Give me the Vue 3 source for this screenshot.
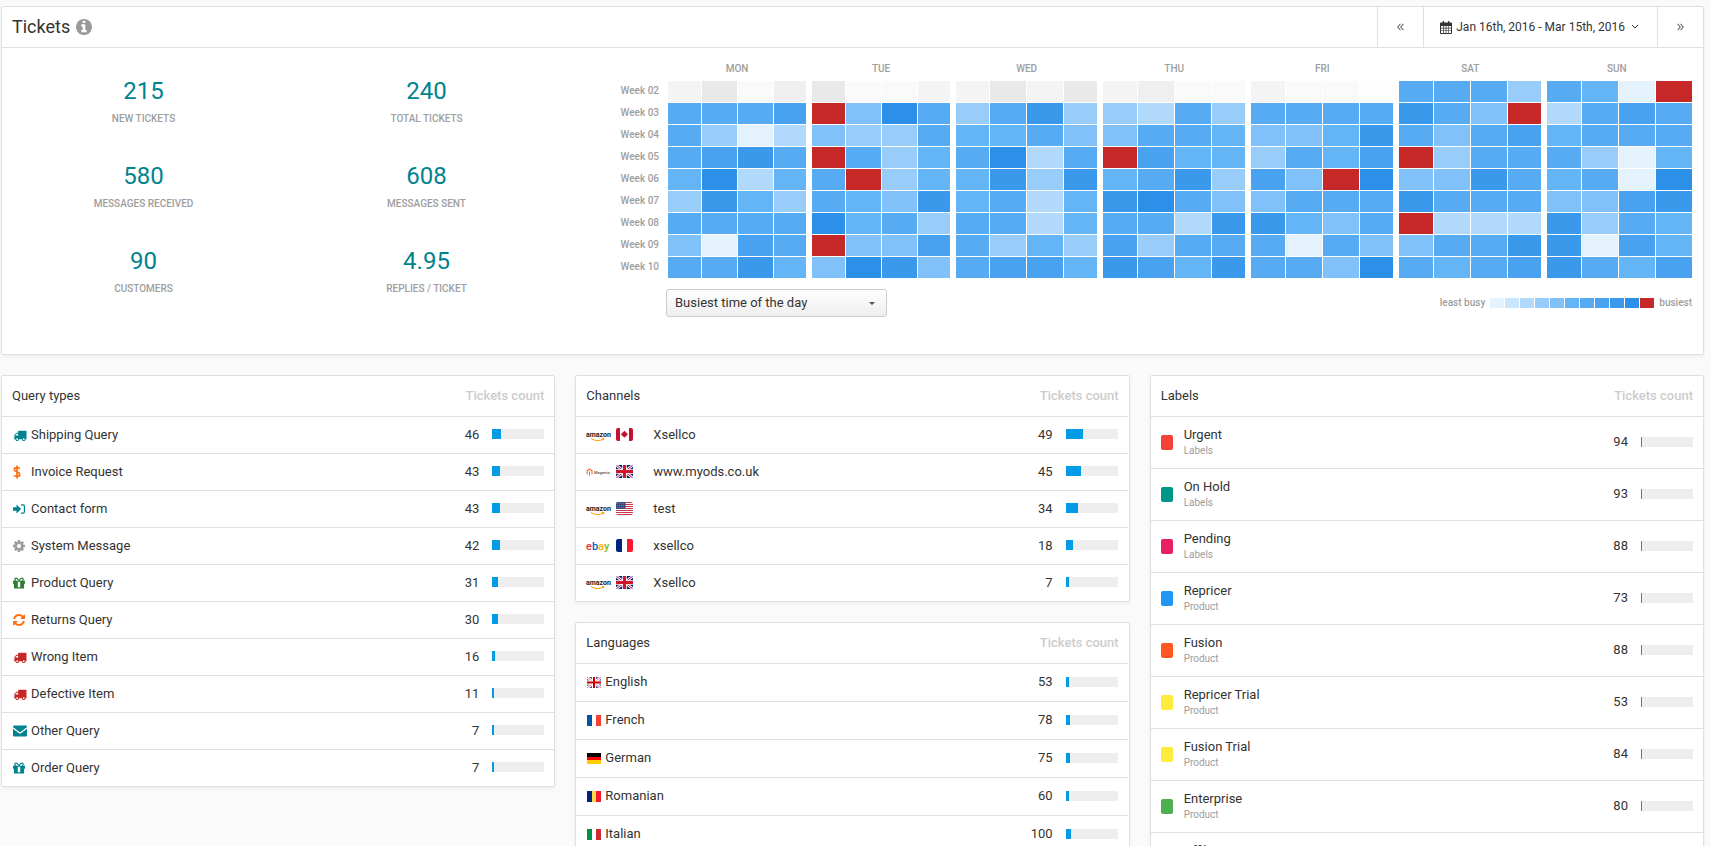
<script setup>
import { ref } from 'vue'

const stats = [
  ['215', 'New tickets'], ['240', 'Total tickets'],
  ['580', 'Messages received'], ['608', 'Messages sent'],
  ['90', 'Customers'], ['4.95', 'Replies / ticket'],
]

const days = ['MON', 'TUE', 'WED', 'THU', 'FRI', 'SAT', 'SUN']
const columns = [
  34, 36, 36, 38, 34, 36, 36, 38, 34, 37, 37, 39, 35, 37, 37, 39,
  35, 37, 37, 39, 35, 37, 37, 39, 35, 37, 37, 36,
]
// 0-9: load level, r: busiest slot, a-e: slots before the selected period
const weeks = [
  ['Week 02', 'abcd bcca abab adcc acce 6663 650r'],
  ['Week 03', '6667 r496 3683 3263 6666 864r 2676'],
  ['Week 04', '6302 4336 5564 4665 4458 6467 5666'],
  ['Week 05', '6786 r635 6926 r755 3657 r366 6305'],
  ['Week 06', '5925 6r35 5838 5683 74r9 4486 5609'],
  ['Week 07', '3853 6548 5625 8964 4666 8666 4478'],
  ['Week 08', '6666 9563 6625 6628 8546 r222 8365'],
  ['Week 09', '4076 r447 6353 7366 6064 4668 8075'],
  ['Week 10', '6685 4984 6775 8758 6649 6567 8657'],
].map(([name, cells]) => ({ name, cells: cells.replaceAll(' ', '').split('') }))
const legend = '0123456789r'.split('')
const mode = ref('time')

const queries = [
  ['truck', 'teal', 'Shipping Query', 46, 17],
  ['dollar', 'orange', 'Invoice Request', 43, 15],
  ['signin', 'teal', 'Contact form', 43, 15],
  ['cog', 'grey', 'System Message', 42, 15],
  ['gift', 'green', 'Product Query', 31, 11],
  ['refresh', 'orange', 'Returns Query', 30, 11],
  ['truck', 'red', 'Wrong Item', 16, 6],
  ['truck', 'red', 'Defective Item', 11, 4],
  ['mail', 'teal', 'Other Query', 7, 4],
  ['gift', 'teal', 'Order Query', 7, 4],
]
const channels = [
  ['amazon', 'ca', 'Xsellco', 49, 33],
  ['magento', 'gb', 'www.myods.co.uk', 45, 29],
  ['amazon', 'us', 'test', 34, 23],
  ['ebay', 'fr', 'xsellco', 18, 14],
  ['amazon', 'gb', 'Xsellco', 7, 6],
]
const languages = [
  ['gb', 'English', 53, 6],
  ['fr', 'French', 78, 8],
  ['de', 'German', 75, 8],
  ['ro', 'Romanian', 60, 6],
  ['it', 'Italian', 100, 10],
]
const labels = [
  ['#f44336', 'Urgent', 'Labels', 94],
  ['#009688', 'On Hold', 'Labels', 93],
  ['#e91e63', 'Pending', 'Labels', 88],
  ['#2196f3', 'Repricer', 'Product', 73],
  ['#ff5722', 'Fusion', 'Product', 88],
  ['#ffeb3b', 'Repricer Trial', 'Product', 53],
  ['#ffeb3b', 'Fusion Trial', 'Product', 84],
  ['#4caf50', 'Enterprise', 'Product', 80],
  ['#9c27b0', 'Affiliate', 'Product', 12],
]

const stripes = {
  fr: ['v', '#0055a4', '#ffffff', '#f44336'],
  ro: ['v', '#00247d', '#fcd94b', '#f8192e'],
  it: ['v', '#009246', '#ffffff', '#ce2b37'],
  de: ['h', '#000000', '#ff0000', '#ffcc00'],
}
</script>

<template>
  <main class="page">
    <section class="card overview">
      <header class="bar">
        <h1>Tickets</h1>
        <svg class="info" viewBox="128 128 1536 1536" aria-hidden="true"><path d="M1152 1376v-160q0-14-9-23t-23-9h-96v-512q0-14-9-23t-23-9h-320q-14 0-23 9t-9 23v160q0 14 9 23t23 9h96v320h-96q-14 0-23 9t-9 23v160q0 14 9 23t23 9h448q14 0 23-9t9-23zm-128-896v-160q0-14-9-23t-23-9h-192q-14 0-23 9t-9 23v160q0 14 9 23t23 9h192q14 0 23-9t9-23zm640 416q0 209-103 385.5t-279.5 279.5-385.5 103-385.5-103-279.5-279.5-103-385.5 103-385.5 279.5-279.5 385.5-103 385.5 103 279.5 279.5 103 385.5z" /></svg>
        <div class="range">
          <button class="step" type="button" aria-label="Previous period">
            <svg width="7" height="8" viewBox="0 0 7 8" class="line"><path d="M3.5 .8L.7 4l2.8 3.2M6.5 .8L3.7 4l2.8 3.2" /></svg>
          </button>
          <button class="dates" type="button">
            <svg width="12" height="13" viewBox="0 0 12 13"><path fill-rule="evenodd" d="M1 1.5h1.5v-.7q0-.8.8-.8t.8.8v.7h3.800v-.7q0-.8.8-.8t.8.8v.7H11q1 0 1 1V12q0 1-1 1H1q-1 0-1-1V2.500q0-1 1-1zM1 5v1.800h2V5zm2.700 0v1.800h2V5zm2.700 0v1.800h2V5zM9 5v1.800h2V5zM1 7.500v1.900h2V7.500zm2.700 0v1.900h2V7.500zm2.700 0v1.900h2V7.500zM9 7.500v1.900h2V7.500zM1 10.100V12h2v-1.900zm2.700 0V12h2v-1.900zm2.700 0V12h2v-1.900zm2.600 0V12h2v-1.900z" /></svg>
            <span>Jan 16th, 2016 - Mar 15th, 2016</span>
            <svg width="8" height="6" viewBox="0 0 8 6" class="line"><path d="M1 1l3 3 3-3" /></svg>
          </button>
          <button class="step" type="button" aria-label="Next period">
            <svg width="7" height="8" viewBox="0 0 7 8" class="line"><path d="M.5 .8L3.300 4 .5 7.200M3.500 .8L6.300 4 3.500 7.200" /></svg>
          </button>
        </div>
      </header>
      <div class="body">
        <dl class="stats">
          <div v-for="[value, name] in stats" :key="name" class="stat">
            <dt>{{ name }}</dt>
            <dd>{{ value }}</dd>
          </div>
        </dl>
        <div class="activity">
          <table class="heat">
            <colgroup>
              <col class="weekcol">
              <col v-for="(w, i) in columns" :key="i" :style="{ width: w + 'px' }">
            </colgroup>
            <thead>
              <tr><td></td><th v-for="d in days" :key="d" colspan="4" scope="colgroup">{{ d }}</th></tr>
            </thead>
            <tbody>
              <tr v-for="week in weeks" :key="week.name">
                <th scope="row">{{ week.name }}</th>
                <td v-for="(c, i) in week.cells" :key="i" :class="'l' + c"></td>
              </tr>
            </tbody>
          </table>
          <div class="tools">
            <div class="picker">
              <select v-model="mode" aria-label="Chart mode">
                <option value="time">Busiest time of the day</option>
              </select>
              <svg class="caret" width="6" height="3" viewBox="0 0 6 3"><path d="M0 0h6L3 3z" /></svg>
            </div>
            <div class="legend">
              <span>least busy</span>
              <ul><li v-for="c in legend" :key="c" :class="'l' + c"></li></ul>
              <span>busiest</span>
            </div>
          </div>
        </div>
      </div>
    </section>

    <div class="columns">
      <section class="card">
        <header class="head"><h2>Query types</h2><span>Tickets count</span></header>
        <ul class="rows">
          <li v-for="[icon, tone, name, count, fill] in queries" :key="name" class="row">
            <span class="icon" :class="tone">
              <svg v-if="icon === 'truck'" width="14" height="13" viewBox="0 0 1792 1792"><path d="M640 1408q0-52-38-90t-90-38-90 38-38 90 38 90 90 38 90-38 38-90zm-384-512h384v-256h-158q-13 0-22 9l-195 195q-9 9-9 22v30zm1280 512q0-52-38-90t-90-38-90 38-38 90 38 90 90 38 90-38 38-90zm256-1088v1024q0 15-4 26.500t-13.500 18.500-16.500 11.500-23.500 6-22.500 2-25.500 0-22.500-.5q0 106-75 181t-181 75-181-75-75-181h-384q0 106-75 181t-181 75-181-75-75-181h-64q-3 0-22.500.5t-25.500 0-22.500-2-23.500-6-16.500-11.500-13.500-18.500-4-26.500q0-26 19-45t45-19v-320q0-8-.5-35t0-38 2.500-34.500 6.500-37 14-30.500 22.500-30l198-198q19-19 50.500-32t58.500-13h160v-192q0-26 19-45t45-19h1024q26 0 45 19t19 45z" /></svg>
              <svg v-else-if="icon === 'dollar'" width="8" height="14" viewBox="0 0 8 14"><path class="thick" d="M4 .5v13M6.700 3.600C5.500 2.400 1.300 2 1.300 4.500 1.300 7.300 6.800 6.500 6.800 9.400 6.800 12 2.400 11.800 1 10.200" /></svg>
              <svg v-else-if="icon === 'signin'" width="12" height="12" viewBox="0 0 12 12"><path d="M0 4.300h3.500V1.500L8.200 6 3.500 10.500V7.700H0z" /><path class="thin" d="M8 1.800h2q1.400 0 1.400 1.400v5.600q0 1.400-1.400 1.400H8" /></svg>
              <svg v-else-if="icon === 'cog'" width="12" height="12" viewBox="128 128 1536 1536"><path d="M1152 896q0-106-75-181t-181-75-181 75-75 181 75 181 181 75 181-75 75-181zm512-109v222q0 12-8 23t-20 13l-185 28q-19 54-39 91 35 50 107 138 10 12 10 25t-9 23q-27 37-99 108t-94 71q-12 0-26-9l-138-108q-44 23-91 38-16 136-29 186-7 28-36 28h-222q-14 0-24.500-8.500t-11.500-21.500l-28-184q-49-16-90-37l-141 107q-10 9-25 9-14 0-25-11-126-114-165-168-7-10-7-23 0-12 8-23 15-21 51-66.500t54-70.500q-27-50-41-99l-183-27q-13-2-21-12.500t-8-23.500v-222q0-12 8-23t19-13l186-28q14-46 39-92-40-57-107-138-10-12-10-24 0-10 9-23 26-36 98.500-107.500t94.500-71.500q13 0 26 10l138 107q44-23 91-38 16-136 29-186 7-28 36-28h222q14 0 24.500 8.500t11.500 21.500l28 184q49 16 90 37l142-107q9-9 24-9 13 0 25 10 129 119 165 170 7 8 7 22 0 12-8 23-15 21-51 66.500t-54 70.500q26 50 41 98l183 28q13 2 21 12.500t8 23.500z" /></svg>
              <svg v-else-if="icon === 'gift'" width="12" height="12" viewBox="0 0 12 12"><path fill-rule="evenodd" d="M0 3.800h12v3h-.9V11q0 .6-.6.6h-9q-.6 0-.6-.6V6.800H0zM4.800 4.800v5.500h2.400V4.800z" /><path class="thin" d="M5.800 3.800C4.800 1.500 3.800.9 2.900 1.100 1.300 1.500 1.500 3.700 3.100 3.800M6.200 3.800C7.200 1.500 8.200.9 9.100 1.100c1.600.4 1.400 2.600-.2 2.700" /></svg>
              <svg v-else-if="icon === 'refresh'" width="12" height="12" viewBox="128 128 1536 1536"><path d="M1639 1056q0 5-1 7-64 268-268 434.500t-478 166.500q-146 0-282.500-55t-243.500-157l-129 129q-19 19-45 19t-45-19-19-45v-448q0-26 19-45t45-19h448q26 0 45 19t19 45-19 45l-137 137q71 66 161 102t187 36q134 0 250-65t186-179q11-17 53-117 8-23 30-23h192q13 0 22.500 9.500t9.500 22.500zm25-800v448q0 26-19 45t-45 19h-448q-26 0-45-19t-19-45 19-45l138-138q-148-137-349-137-134 0-250 65t-186 179q-11 17-53 117-8 23-30 23h-199q-13 0-22.500-9.500t-9.500-22.500v-7q65-268 270-434.500t480-166.500q146 0 284 55.500t245 156.500l130-129q19-19 45-19t45 19 19 45z" /></svg>
              <svg v-else width="14" height="12" viewBox="0 0 14 12"><path d="M0 1.800Q0 .6 1.200.6h11.600q1.200 0 1.200 1.200v.3L7.600 6.900q-.6.4-1.200 0L0 2.100zM0 3.800l6 4.400q1 .6 2 0l6-4.400V10.500q0 1.100-1.200 1.100H1.200Q0 11.600 0 10.500z" /></svg>
            </span>
            <span class="name">{{ name }}</span>
            <span class="count">{{ count }}</span>
            <span class="meter"><i :style="{ width: fill + '%' }"></i></span>
          </li>
        </ul>
      </section>

      <div class="stack">
        <section class="card">
          <header class="head"><h2>Channels</h2><span>Tickets count</span></header>
          <ul class="rows">
            <li v-for="([brand, flag, name, count, fill], i) in channels" :key="i" class="row">
              <span class="brand">
                <svg class="logo" width="26" height="14" viewBox="0 0 26 14">
                  <g v-if="brand === 'amazon'">
                    <text x="0" y="9" class="amazon" fill="#222">amazon</text>
                    <path class="smile" d="M5 10.500Q11.500 14.500 17.500 11M15.800 10.700l2.200-.2-.5 1.800" />
                  </g>
                  <g v-else-if="brand === 'magento'">
                    <path d="M3.500 3.500L6.500 5.200V9l-1 .6V6L3.500 4.700 1.600 6v3.600L.6 9V5.200zM3 6.200h1v4.200l-.5.300-.5-.3z" fill="#f26322" />
                    <text x="8" y="9" class="magento" fill="#555">Magento</text>
                  </g>
                  <text v-else x="0" y="11" class="ebay"><tspan fill="#e53238">e</tspan><tspan fill="#0064d2">b</tspan><tspan fill="#f5af02">a</tspan><tspan fill="#86b817">y</tspan></text>
                </svg>
                <svg class="round" width="17" height="13" viewBox="0 0 17 13">
                  <g v-if="flag === 'ca'"><path fill="#fff" d="M0 0h17v13H0z" /><path fill="#c8102e" d="M0 0h4v13H0zM13 0h4v13h-4zM8.500 2.500l.8 1.400 1-.4-.2 1.700 1.600-.2-.5 1.300.6.4-2.300 1.700.1.600-1-.1v1.300h-.4V8.900l-1 .1.100-.6L5 6.700l.6-.4L5.100 5l1.600.2-.2-1.700 1 .4z" /></g>
                  <g v-else-if="flag === 'gb'"><path fill="#00247d" d="M0 0h17v13H0z" /><path stroke="#fff" stroke-width="2.600" d="M0 0l17 13M17 0L0 13" /><path stroke="#cf142b" stroke-width="1" d="M0 0l17 13M17 0L0 13" /><path stroke="#fff" stroke-width="4.600" d="M8.500 0v13M0 6.500h17" /><path stroke="#cf142b" stroke-width="3" d="M8.500 0v13M0 6.500h17" /></g>
                  <g v-else-if="flag === 'us'"><path fill="#fff" d="M0 0h17v13H0z" /><path stroke="#c8394a" d="M0 .5h17M0 2.500h17M0 4.500h17M0 6.500h17M0 8.500h17M0 10.500h17M0 12.500h17" /><path fill="#3c4a7c" d="M0 0h9.500v7H0z" /><path stroke="#8791b3" stroke-dasharray="1 1" stroke-width=".6" d="M1 1.500h8M1 3.500h8M1 5.500h8" /></g>
                  <g v-else><path fill="#fff" d="M0 0h17v13H0z" /><path fill="#00247d" d="M0 0h6v13H0z" /><path fill="#f8192e" d="M11 0h6v13h-6z" /></g>
                </svg>
              </span>
              <span class="name">{{ name }}</span>
              <span class="count">{{ count }}</span>
              <span class="meter"><i :style="{ width: fill + '%' }"></i></span>
            </li>
          </ul>
        </section>
        <section class="card">
          <header class="head"><h2>Languages</h2><span>Tickets count</span></header>
          <ul class="rows languages">
            <li v-for="[flag, name, count, fill] in languages" :key="name" class="row">
              <svg class="flag" width="14" height="11" viewBox="0 0 14 11">
                <g v-if="flag === 'gb'"><path fill="#3f58a0" d="M0 0h14v11H0z" /><path stroke="#fff" stroke-width="2.600" d="M0 0l14 11M14 0L0 11" /><path stroke="#e0506a" stroke-width=".8" d="M0 0l14 11M14 0L0 11" /><path stroke="#fff" stroke-width="4" d="M7 0v11M0 5.500h14" /><path stroke="#cc0000" stroke-width="2" d="M7 0v11M0 5.500h14" /></g>
                <g v-else-if="stripes[flag][0] === 'v'"><path :fill="stripes[flag][1]" d="M0 0h5v11H0z" /><path :fill="stripes[flag][2]" d="M5 0h4v11H5z" /><path :fill="stripes[flag][3]" d="M9 0h5v11H9z" /></g>
                <g v-else><path :fill="stripes[flag][1]" d="M0 0h14v4H0z" /><path :fill="stripes[flag][2]" d="M0 4h14v3H0z" /><path :fill="stripes[flag][3]" d="M0 7h14v4H0z" /></g>
              </svg>
              <span class="name">{{ name }}</span>
              <span class="count">{{ count }}</span>
              <span class="meter"><i :style="{ width: fill + '%' }"></i></span>
            </li>
          </ul>
        </section>
      </div>

      <section class="card">
        <header class="head"><h2>Labels</h2><span>Tickets count</span></header>
        <ul class="rows labels">
          <li v-for="[color, name, group, count] in labels" :key="name" class="row">
            <span class="swatch" :style="{ background: color }"></span>
            <span class="name">{{ name }}<small>{{ group }}</small></span>
            <span class="count">{{ count }}</span>
            <span class="meter"><i></i></span>
          </li>
        </ul>
      </section>
    </div>
  </main>
</template>

<style>
html, body { background: #fafafa; }
body { margin: 0; height: 100vh; overflow: hidden; }
</style>

<style scoped>
* { box-sizing: border-box; }
.page {
  padding: 6px 7px 0 1px;
  font: 13px/18px Roboto, "Liberation Sans", sans-serif;
  color: #333;
}
h1, h2, ul, dl, dd { margin: 0; padding: 0; font-weight: 400; list-style: none; }
svg { display: block; flex: none; fill: currentColor; }
.card {
  background: #fff;
  border: 1px solid #e0e0e0;
  border-radius: 2px;
  box-shadow: 0 2px 4px rgba(0, 0, 0, 0.05);
}
.bar { display: flex; align-items: center; height: 41px; padding-left: 10px; border-bottom: 1px solid #e0e0e0; }
h1 { font-size: 18px; line-height: 24px; }
.info { width: 16px; height: 16px; margin-left: 6px; color: #999; }
.range { display: flex; align-self: stretch; margin-left: auto; }
.range button {
  display: flex; align-items: center; justify-content: center;
  padding: 0; border: 0; border-left: 1px solid #e0e0e0;
  background: none; font: inherit; color: inherit;
}
.range .step { width: 46px; }
.range .dates { padding: 0 18px 0 16px; gap: 4px; font-size: 12px; }
.range .dates .line { margin-left: 2px; }
.line { fill: none; stroke: currentColor; }

.body { display: grid; grid-template-columns: 1fr 2fr; height: 306px; }
.stats { display: grid; grid-template-columns: 1fr 1fr; grid-auto-rows: 85px; padding: 25px 1px 0 0; }
.stat { display: flex; flex-direction: column-reverse; justify-content: flex-end; text-align: center; }
dd { font-size: 24px; line-height: 36px; color: #00838f; }
dt { font-size: 10px; font-weight: 500; line-height: 20px; color: #9e9e9e; text-transform: uppercase; }

.activity { min-width: 0; padding: 10px 11px 0 0; }
.heat { width: 100%; table-layout: fixed; border-collapse: separate; border-spacing: 0; }
.weekcol { width: 99px; }
.heat th, .heat td { height: 22px; padding: 0; }
.heat th { font-size: 10px; font-weight: 500; line-height: 20px; color: #9e9e9e; }
.heat thead th, .heat thead td { height: 23px; padding: 0 6px 2px 0; }
.heat tbody th { padding: 0 9px 2px 0; text-align: right; }
.heat tbody td { border: 0 solid #fff; border-width: 0 1px 1px 0; }
.heat tbody td:nth-child(4n + 1) { border-right-width: 6px; }
.heat tbody td:last-child { border-right-width: 0; }
.l0 { background: #e3f2fd; }
.l1 { background: #cae6fc; }
.l2 { background: #b0d9fb; }
.l3 { background: #98cdf9; }
.l4 { background: #7fc1f8; }
.l5 { background: #64b5f6; }
.l6 { background: #56abf3; }
.l7 { background: #48a2ef; }
.l8 { background: #3b99ec; }
.l9 { background: #2c90e8; }
.lr { background: #c62828; }
.la { background: #f4f4f4; }
.lb { background: #e9e9e9; }
.lc { background: #fafafa; }
.ld { background: #efefef; }
.le { background: #fdfdfd; }

.tools { display: flex; justify-content: space-between; padding: 10px 0 0 97px; }
.picker { position: relative; width: 221px; }
select {
  display: block; width: 100%; height: 28px; padding: 0 24px 0 8px;
  appearance: none; border: 1px solid #ccc; border-radius: 3px;
  background: linear-gradient(#fff, #eee);
  font: inherit; color: #333;
}
.caret { position: absolute; right: 12px; top: 13px; color: #555; pointer-events: none; }
.legend { display: flex; align-items: center; gap: 5px; height: 28px; font-size: 10px; font-weight: 500; color: #9e9e9e; }
.legend ul { display: flex; gap: 1px; }
.legend li { width: 14px; height: 10px; }

.columns { display: grid; grid-template-columns: repeat(3, minmax(0, 1fr)); gap: 20px; align-items: start; margin-top: 20px; }
.stack { display: grid; gap: 20px; }
.stack .rows { margin-right: 1px; }
.head { display: flex; justify-content: space-between; align-items: center; height: 40px; padding: 0 10px; }
h2 { font-size: 13px; }
.head span { font-weight: 500; color: #ccc; }
.row { display: flex; align-items: center; height: 37px; padding: 0 10px; border-top: 1px solid #e0e0e0; }
.name { flex: 1; }
.count { margin-right: 13px; }
.meter { width: 52px; height: 10px; margin-bottom: 2px; background: #eee; }
.meter i { display: block; min-width: 1px; height: 10px; background: #039be5; }
.icon { width: 19px; padding-left: 1px; }
.teal { color: #00838f; }
.orange { color: #ff6f0f; }
.grey { color: #9e9e9e; }
.green { color: #2e7d32; }
.red { color: #c62828; }
.thick { fill: none; stroke: currentColor; stroke-width: 1.700; }
.thin { fill: none; stroke: currentColor; stroke-width: 1.200; }
.brand { display: flex; align-items: center; gap: 4px; width: 67px; padding-bottom: 1px; }
.logo { overflow: visible; }
.round { border-radius: 2px; }
.amazon { font: 700 7px Roboto, sans-serif; }
.magento { font: 500 4px Roboto, sans-serif; }
.ebay { font: 500 11px Roboto, sans-serif; }
.smile { fill: none; stroke: #f90; }
.languages .row, .labels .row { height: 38px; padding-bottom: 2px; }
.languages .meter, .labels .meter { margin-bottom: 0; }
.flag { margin: 2px 4px 0 1px; }
.labels .row { height: 52px; }
.labels .meter i { width: 1px; }
.swatch { width: 12px; height: 15px; margin: 2px 11px 0 0; border-radius: 2px; }
small { display: block; font-size: 10px; line-height: 14px; color: #9e9e9e; }
</style>
